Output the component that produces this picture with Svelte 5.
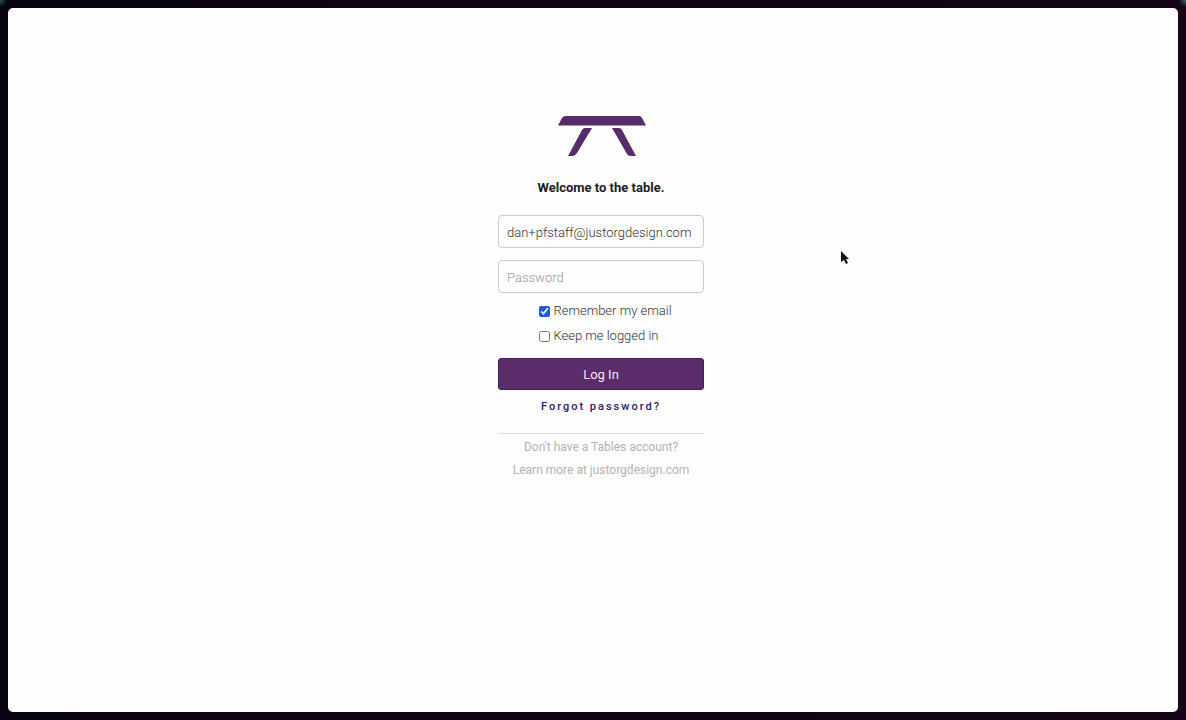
<script lang="ts">
  let email = $state('dan+pfstaff@justorgdesign.com');
  let password = $state('');
  let rememberEmail = $state(true);
  let keepLoggedIn = $state(false);

  function logIn(event: SubmitEvent) {
    event.preventDefault();
  }
</script>

<div class="frame">
  <main class="screen">
    <div class="login">
      <svg class="logo" viewBox="-1 0 90 42" role="img" aria-label="Tables">
        <path d="M8 1H81Q83 1 84 3L88 10.500H0L4 3Q5 1 8 1Z" />
        <path d="M27 13H34L19 38Q17 41 15 41H10L24 15Q25 13 27 13Z" />
        <path d="M54 13H61Q63 13 64 15L78 41H73Q70 41 69 39Z" />
      </svg>
      <h1>Welcome to the table.</h1>

      <form onsubmit={logIn}>
        <input class="field" type="email" aria-label="Email" placeholder="Email" spellcheck="false" bind:value={email} />
        <input class="field" type="password" aria-label="Password" placeholder="Password" bind:value={password} />

        <div class="options">
          <label>
            <input type="checkbox" bind:checked={rememberEmail} />
            <span>Remember my email</span>
          </label>
          <label>
            <input type="checkbox" bind:checked={keepLoggedIn} />
            <span>Keep me logged in</span>
          </label>
        </div>

        <button type="submit">Log In</button>
      </form>

      <a class="forgot" href="#forgot">Forgot password?</a>

      <footer>
        <p>Don't have a Tables account?</p>
        <a href="#learn-more">Learn more at justorgdesign.com</a>
      </footer>
    </div>
  </main>

  <svg class="cursor" viewBox="0 0 10 16" aria-hidden="true">
    <path d="M1 1V12L4 10L6 14L8 13L6 9H9Z" />
  </svg>
</div>

<style>
  :global(body) {
    margin: 0;
    background: #100412;
  }

  .frame {
    position: relative;
    display: flex;
    box-sizing: border-box;
    min-height: 100vh;
    padding: 8px;
    background:
      radial-gradient(circle at 0 0, #2c5a58, transparent 7px),
      radial-gradient(circle at 100% 0, #3a6a68, transparent 7px),
      linear-gradient(100deg, #08030f, #100412 50%, #180419);
    font-family: Roboto, 'Liberation Sans', sans-serif;
    font-size: 13px;
    font-weight: 300;
    line-height: 20px;
    color: #333;
  }

  .screen {
    flex: 1;
    display: flex;
    justify-content: center;
    align-items: flex-start;
    padding: 107px 0 32px 16px;
    border-radius: 5px;
    background: #fdfdfd;
  }

  .login {
    display: flex;
    flex-direction: column;
    align-items: center;
    width: 206px;
  }

  .logo {
    width: 90px;
    height: 42px;
    margin-left: 2px;
    fill: #572c6b;
  }

  h1 {
    margin: 21px 0 17px;
    font-size: 13px;
    font-weight: 700;
    line-height: 20px;
    color: #1c1c1c;
  }

  form {
    display: flex;
    flex-direction: column;
    width: 100%;
  }

  .field {
    box-sizing: border-box;
    width: 100%;
    height: 33px;
    margin: 0 0 12px;
    padding: 2px 8px 0;
    border: 1px solid #ccc;
    border-radius: 4px;
    background: #fdfdfd;
    font: inherit;
    color: #333;
  }

  .field::placeholder {
    color: #999;
    opacity: 1;
  }

  .options {
    display: flex;
    flex-direction: column;
    gap: 5px;
    align-self: center;
    margin: -4px 0 12px;
    padding-left: 9px;
  }

  label {
    display: flex;
    align-items: center;
    gap: 3px;
  }

  label input {
    width: 11px;
    height: 11px;
    margin: 0;
    accent-color: #1a5fdf;
  }

  button {
    height: 32px;
    padding: 2px 0 0;
    border: 1px solid #481d59;
    border-radius: 3px;
    background: #5b2c6b;
    font: inherit;
    font-weight: 400;
    color: #f4e6f8;
    cursor: pointer;
  }

  a {
    color: inherit;
    text-decoration: none;
  }

  .forgot {
    margin-top: 7px;
    font-size: 11px;
    font-weight: 500;
    letter-spacing: 2px;
    color: #2b2069;
  }

  footer {
    width: 100%;
    margin-top: 16px;
    padding-top: 3px;
    border-top: 1px solid #ddd;
    font-size: 12px;
    font-weight: 400;
    text-align: center;
    white-space: nowrap;
    color: #b3b3b3;
  }

  footer p {
    margin: 0 0 3px;
  }

  .cursor {
    position: absolute;
    top: 250px;
    left: 840px;
    width: 10px;
    height: 16px;
    fill: #111;
    stroke: #fff;
    stroke-width: 1;
    paint-order: stroke;
    pointer-events: none;
  }
</style>
